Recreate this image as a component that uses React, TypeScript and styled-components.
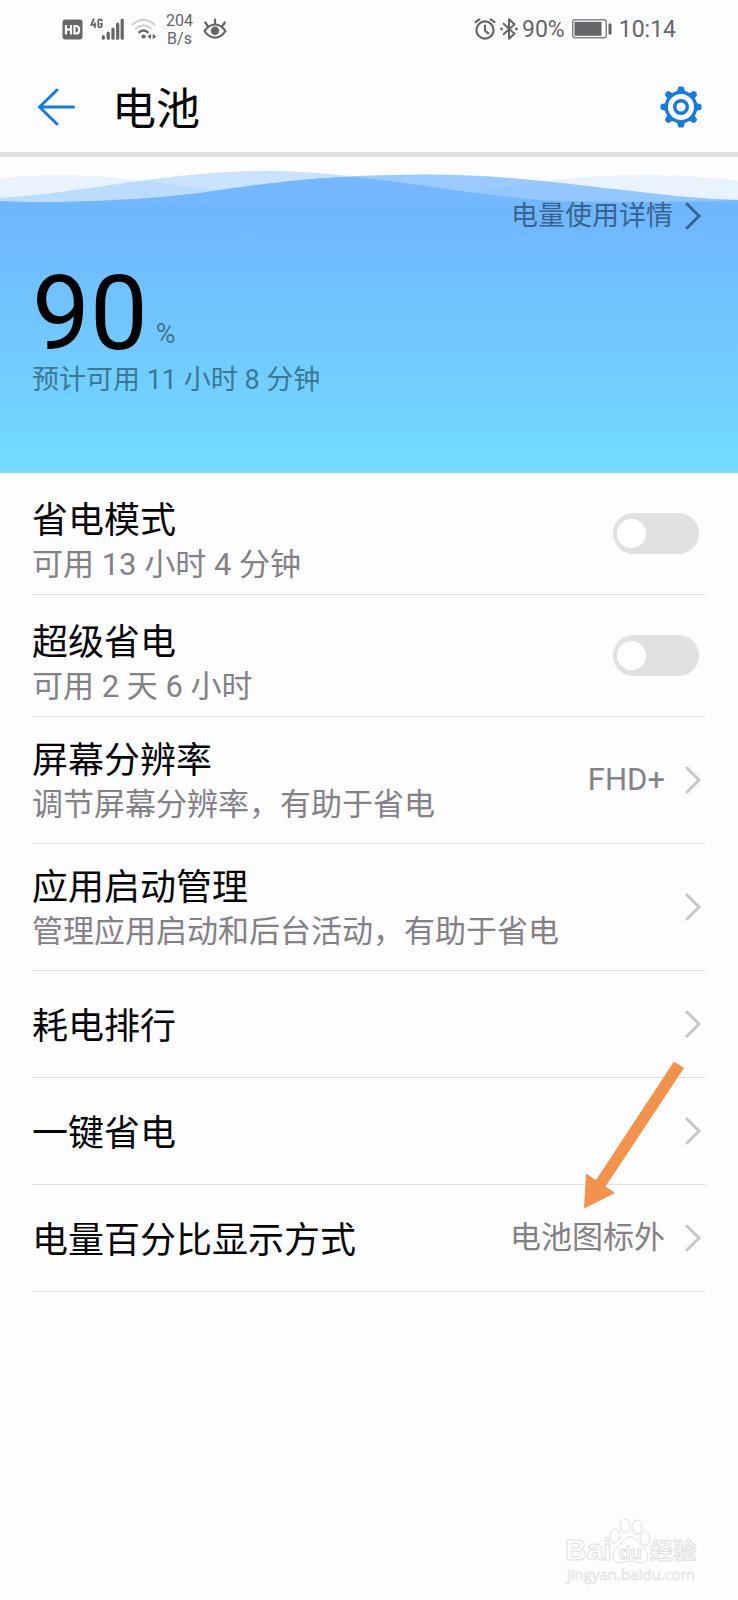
import React, { useState } from 'react';
import styled, { createGlobalStyle } from 'styled-components';

const GlobalStyle = createGlobalStyle`
  * { box-sizing: border-box; }
  body {
    margin: 0;
    background: #fdfcff;
    color: #050506;
    font-family: Roboto, "Noto Sans CJK SC", sans-serif;
  }
  button, input { font: inherit; color: inherit; }
`;

const Page = styled.div`
  display: flex;
  flex-direction: column;
  min-height: 100vh;
`;

const StatusBar = styled.div`
  display: flex;
  align-items: center;
  justify-content: space-between;
  height: 62px;
  padding: 0 62px 4px;
  color: #666468;
`;

const StatusGroup = styled.div<{ $gap: number }>`
  display: flex;
  align-items: center;
  gap: ${(p) => p.$gap}px;
`;

const StatusText = styled.span`
  padding-top: 2px;
  font-size: 23px;
  line-height: 28px;
`;

const NetSpeed = styled.span`
  display: flex;
  flex-direction: column;
  align-items: center;
  padding: 2px 3px 0 2px;
  font-size: 16px;
  line-height: 18px;
`;

const Header = styled.header`
  display: flex;
  align-items: center;
  height: 95px;
  padding: 0 36px;
  border-bottom: 5px solid #e2e1e4;
`;

const IconButton = styled.button`
  display: flex;
  padding: 0;
  border: 0;
  background: none;
  color: #1a7ad6;
  cursor: pointer;
`;

const Title = styled.h1`
  flex: 1;
  margin: 0 0 0 36px;
  padding-top: 5px;
  font-size: 44px;
  font-weight: 400;
  line-height: 56px;
`;

const Hero = styled.section`
  position: relative;
  height: 316px;
  padding: 41px 32px 0;
  background: linear-gradient(#70b5ff, #73e2ff) 0 46px no-repeat;
`;

const Waves = styled.svg`
  position: absolute;
  top: 0;
  left: 0;
  width: 100%;
  height: 46px;
`;

const HeroContent = styled.div`
  position: relative;
  display: flex;
  flex-direction: column;
`;

const DetailLink = styled.a`
  display: flex;
  align-items: center;
  align-self: flex-end;
  gap: 12px;
  padding-right: 5px;
  color: #37638f;
  font-size: 27px;
  line-height: 36px;
  text-decoration: none;
`;

const Level = styled.div`
  display: flex;
  align-items: flex-end;
  gap: 8px;
  margin-top: 32px;
`;

const LevelNumber = styled.span`
  color: #000;
  font-size: 103px;
  line-height: 96px;
`;

const LevelUnit = styled.span`
  margin-bottom: 10px;
  color: #3d7391;
  font-size: 27px;
  line-height: 36px;
`;

const Estimate = styled.p`
  margin: 0;
  color: #3a7893;
  font-size: 27px;
  line-height: 36px;
`;

const List = styled.ul`
  position: relative;
  margin: 0;
  padding: 0 33px 0 32px;
  list-style: none;
`;

const Item = styled.li`
  border-bottom: 1px solid #dfdee1;
`;

const SwitchRow = styled.label`
  display: flex;
  align-items: center;
  justify-content: space-between;
  padding-right: 6px;
  cursor: pointer;
`;

const NavRow = styled.button`
  display: flex;
  align-items: center;
  width: 100%;
  min-height: 106px;
  padding: 0 4px 0 0;
  border: 0;
  background: none;
  text-align: left;
  cursor: pointer;
`;

const RowText = styled.span<{ $top: number; $bottom: number }>`
  display: flex;
  flex: 1;
  flex-direction: column;
  padding: ${(p) => p.$top}px 0 ${(p) => p.$bottom}px;
`;

const RowTitle = styled.span`
  font-size: 36px;
  line-height: 44px;
`;

const RowNote = styled.span`
  color: #838185;
  font-size: 31px;
  line-height: 44px;
`;

const RowValue = styled.span`
  margin-right: 20px;
  color: #838185;
  font-size: 31px;
  line-height: 44px;
`;

const Toggle = styled.input`
  display: flex;
  align-items: center;
  appearance: none;
  width: 86px;
  height: 41px;
  margin: 0;
  padding: 0 4px;
  border-radius: 21px;
  background: #e1e0e3;
  cursor: pointer;

  &::before {
    content: '';
    width: 29px;
    height: 29px;
    border-radius: 50%;
    background: #fff;
  }
  &:checked {
    justify-content: flex-end;
    background: #1a7ad6;
  }
`;

const Pointer = styled.li`
  position: absolute;
  right: 52px;
  bottom: 82px;
  pointer-events: none;

  svg { display: block; }
`;

const Footer = styled.footer`
  display: flex;
  justify-content: flex-end;
  margin-top: auto;
  padding: 0 35px 13px;
`;

function Chevron({ color }: { color: string }) {
  return (
    <svg width="16" height="28" viewBox="0 0 16 28" fill="none" stroke={color} strokeWidth="3" strokeLinecap="round" strokeLinejoin="round" aria-hidden="true">
      <path d="M2 2l12 12L2 26" />
    </svg>
  );
}

function HdIcon() {
  return (
    <svg width="21" height="21" viewBox="0 0 21 21" aria-label="HD">
      <rect x="0.5" y="0.5" width="20" height="20" rx="3" fill="currentColor" />
      <path d="M4 6v9.500M9 6v9.500M4 10.700H9M12.500 7v7.500h1.500q3 0 3-2.800v-1.900q0-2.800-3-2.800z" fill="none" stroke="#fdfcff" strokeWidth="2.200" />
    </svg>
  );
}

function SignalIcon() {
  return (
    <svg width="34" height="22" viewBox="0 0 34 22" fill="none" stroke="currentColor" aria-label="4G">
      <path d="M3.900 0.700L1.300 6.800H6.200M4.800 4.500V10M11.800 3.500V3Q11.800 1.300 10 1.300T8.300 3V7.700Q8.300 9.300 10 9.300T11.800 7.700V5.800H10" strokeWidth="1.800" />
      <path d="M13.300 20.200v-1.500M18.200 20.200v-5M23 20.200v-9M27.700 20.200V6.200M32.200 20.200V2" strokeWidth="3.200" strokeLinecap="round" />
    </svg>
  );
}

function WifiIcon() {
  return (
    <svg width="26" height="22" viewBox="0 0 26 22" fill="none" strokeLinecap="round" aria-label="Wi-Fi">
      <path d="M1.500 6.500Q12 -2.800 23.500 6.500M5 10.500Q12.500 4.300 20 10.500" stroke="#d2d0d4" strokeWidth="2.200" />
      <path d="M8.300 14.200Q12.500 10.700 16.700 14.200" stroke="currentColor" strokeWidth="2.400" />
      <circle cx="12.500" cy="18.500" r="2.100" fill="currentColor" />
      <path d="M20 15.700v5.600l-3.600-2.800zM21.700 15.700v5.600l3.600-2.800z" fill="currentColor" />
    </svg>
  );
}

function EyeIcon() {
  return (
    <svg width="24" height="22" viewBox="0 0 24 22" fill="none" stroke="currentColor" strokeWidth="2.200" strokeLinecap="round" aria-label="护眼模式">
      <path d="M1.500 13Q6 6.500 12 6.500T22.500 13Q18 19.600 12 19.600T1.500 13z" strokeLinejoin="round" />
      <circle cx="12" cy="12.800" r="4.200" fill="currentColor" stroke="none" />
      <path d="M12 1.500V6M2.200 4.500L4.700 8M21.800 4.500L19.300 8" />
    </svg>
  );
}

function AlarmIcon() {
  return (
    <svg width="22" height="22" viewBox="0 0 22 22" fill="none" stroke="currentColor" strokeWidth="2.200" strokeLinecap="round" aria-label="闹钟">
      <circle cx="11" cy="12" r="8.600" />
      <path d="M11 7.500V12.500L14.300 15.300M1.500 4.200L5.300 1.300M20.500 4.200L16.700 1.300" />
    </svg>
  );
}

function BluetoothIcon() {
  return (
    <svg width="18" height="22" viewBox="0 0 18 22" fill="none" stroke="currentColor" strokeWidth="2" strokeLinejoin="round" aria-label="蓝牙">
      <path d="M3 5.200L14.500 15.700L9 20.800V1.200L14.500 6.300L3 16.800" />
      <path d="M0.300 11h2.600M15.100 11h2.600" strokeWidth="2.400" />
    </svg>
  );
}

function BatteryIcon() {
  return (
    <svg width="40" height="20" viewBox="0 0 40 20" aria-label="电池">
      <rect x="0.750" y="0.750" width="33.500" height="18" rx="2.500" fill="none" stroke="#858387" strokeWidth="1.500" />
      <rect x="2.500" y="2.800" width="27" height="14" fill="currentColor" />
      <rect x="36.500" y="4.500" width="3" height="11" rx="1.200" fill="currentColor" />
    </svg>
  );
}

function GearIcon() {
  const angles = [0, 45, 90, 135, 180, 225, 270, 315];
  return (
    <svg width="42" height="42" viewBox="-21 -21 42 42" aria-hidden="true">
      {angles.map((a) => (
        <path
          key={a}
          d={a % 90 === 0
            ? 'M-4.500 -14L-2.600 -20Q-2.400 -20.500 -1.800 -20.500H1.800Q2.400 -20.500 2.600 -20L4.500 -14z'
            : 'M-4 -14L-2.800 -19.500Q-2.400 -21 0 -21T2.800 -19.500L4 -14z'}
          fill="currentColor"
          transform={`rotate(${a})`}
        />
      ))}
      <circle r="14.700" fill="#fdfcff" stroke="currentColor" strokeWidth="3.400" />
      <circle r="6.300" fill="none" stroke="currentColor" strokeWidth="3.400" />
    </svg>
  );
}

function Watermark() {
  return (
    <svg width="140" height="72" viewBox="0 0 140 72" fill="#fefeff" stroke="#e0dfe3" strokeWidth="1" aria-label="Baidu 经验">
      <text x="2" y="45" fontSize="30" fontFamily="'Liberation Sans', sans-serif" fontWeight="700">Bai</text>
      <ellipse cx="52" cy="21" rx="5" ry="7" />
      <ellipse cx="62" cy="11" rx="5" ry="7" />
      <ellipse cx="74" cy="12" rx="5" ry="7" />
      <ellipse cx="82" cy="23" rx="5" ry="7" />
      <path d="M67 22C60 22 58 29 54 33C49 37 48 47 56 48C61 48 63 46 67 46S74 48 79 48C86 47 86 37 81 33C77 29 74 22 67 22z" />
      <text x="56" y="44" fontSize="19" fontFamily="'Liberation Sans', sans-serif" fontWeight="700">du</text>
      <text x="87" y="44" fontSize="23" fontFamily="'Noto Sans CJK SC', sans-serif" fontWeight="700">经验</text>
      <text x="4" y="65" fontSize="15" fontFamily="'Open Sans', sans-serif" fill="#f3f2f5" strokeWidth="0.500">jingyan.baidu.com</text>
    </svg>
  );
}

interface SwitchItem { title: string; note: string }
interface NavItem { title: string; note?: string; value?: string }

const switches: SwitchItem[] = [
  { title: '省电模式', note: '可用 13 小时 4 分钟' },
  { title: '超级省电', note: '可用 2 天 6 小时' },
];

const links: NavItem[] = [
  { title: '屏幕分辨率', note: '调节屏幕分辨率，有助于省电', value: 'FHD+' },
  { title: '应用启动管理', note: '管理应用启动和后台活动，有助于省电' },
  { title: '耗电排行' },
  { title: '一键省电' },
  { title: '电量百分比显示方式', value: '电池图标外' },
];

function SwitchListItem({ title, note }: SwitchItem) {
  const [on, setOn] = useState(false);
  return (
    <Item>
      <SwitchRow>
        <RowText $top={26} $bottom={7}>
          <RowTitle>{title}</RowTitle>
          <RowNote>{note}</RowNote>
        </RowText>
        <Toggle type="checkbox" role="switch" checked={on} onChange={(e) => setOn(e.target.checked)} />
      </SwitchRow>
    </Item>
  );
}

function NavListItem({ title, note, value }: NavItem) {
  return (
    <Item>
      <NavRow type="button">
        <RowText $top={note ? 22 : 5} $bottom={note ? 16 : 0}>
          <RowTitle>{title}</RowTitle>
          {note && <RowNote>{note}</RowNote>}
        </RowText>
        {value && <RowValue>{value}</RowValue>}
        <Chevron color="#c8c6ca" />
      </NavRow>
    </Item>
  );
}

export default function App() {
  return (
    <Page>
      <GlobalStyle />
      <StatusBar>
        <StatusGroup $gap={7}>
          <HdIcon />
          <SignalIcon />
          <WifiIcon />
          <NetSpeed>
            <span>204</span>
            <span>B/s</span>
          </NetSpeed>
          <EyeIcon />
        </StatusGroup>
        <StatusGroup $gap={7}>
          <StatusGroup $gap={4}>
            <AlarmIcon />
            <BluetoothIcon />
            <StatusText>90%</StatusText>
          </StatusGroup>
          <BatteryIcon />
          <StatusText>10:14</StatusText>
        </StatusGroup>
      </StatusBar>

      <Header>
        <IconButton type="button" aria-label="返回">
          <svg width="40" height="40" viewBox="0 0 40 40" fill="none" stroke="currentColor" strokeWidth="3" strokeLinecap="round" strokeLinejoin="round" aria-hidden="true">
            <path d="M37.500 20H3.500M21 3L3.500 20L21 37" />
          </svg>
        </IconButton>
        <Title>电池</Title>
        <IconButton type="button" aria-label="设置">
          <GearIcon />
        </IconButton>
      </Header>

      <main>
        <Hero>
          <Waves viewBox="0 0 738 46" preserveAspectRatio="none" fill="#70b5ff" aria-hidden="true">
            <path d="M0 21.500C20 19 40 18 60 18C150 18 210 40 360 45C470 45 520 18 640 18C680 18 710 20 738 24V46H0z" opacity="0.140" />
            <path d="M0 41C90 35 170 14 265 14C380 14 470 44 560 46H0z" opacity="0.370" />
            <path d="M0 44C30 46 120 46 200 36C280 24 340 17.500 430 17.500C540 17.500 640 40 738 43V46H0z" opacity="0.700" />
            <path d="M0 44C30 46 120 46 200 36C260 27 300 22 345 20C400 23 460 36 540 43C610 46 680 45 738 43V46H0z" opacity="0.850" />
          </Waves>
          <HeroContent>
            <DetailLink href="#usage">
              电量使用详情
              <Chevron color="#37638f" />
            </DetailLink>
            <Level>
              <LevelNumber>90</LevelNumber>
              <LevelUnit>%</LevelUnit>
            </Level>
            <Estimate>预计可用 11 小时 8 分钟</Estimate>
          </HeroContent>
        </Hero>

        <List>
          {switches.map((s) => <SwitchListItem key={s.title} {...s} />)}
          {links.map((l) => <NavListItem key={l.title} {...l} />)}
          <Pointer aria-hidden="true">
            <svg width="106" height="152" viewBox="0 0 106 152">
              <path d="M94 3.500L16 122L6 115.500L4 150.500L35 135L25.500 128.500L104 10z" fill="#f2934d" />
            </svg>
          </Pointer>
        </List>
      </main>

      <Footer>
        <Watermark />
      </Footer>
    </Page>
  );
}
